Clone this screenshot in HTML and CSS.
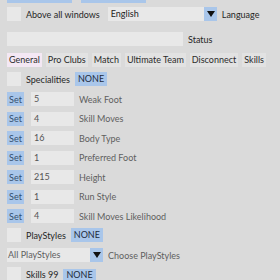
FILE: index.html
```html
<!DOCTYPE html>
<html lang="en">

<head>
    <meta charset="UTF-8">
    <title>Player Editor</title>
    <link rel="stylesheet" href="styles.css">
</head>

<body>
    <div class="panel">
        <div class="top-buttons">
            <span class="btn btn-wide"></span>
            <span class="btn btn-wide"></span>
        </div>

        <div class="row row-first">
            <span class="check"></span>
            <span class="label dark">Above all windows</span>
            <div class="combo combo-lang">
                <span class="combo-text">English</span>
                <span class="combo-arrow"></span>
            </div>
            <span class="label dark">Language</span>
        </div>

        <div class="row row-status">
            <input class="field field-status" type="text">
            <span class="label dark">Status</span>
        </div>

        <div class="tabs">
            <span class="tab active">General</span>
            <span class="tab">Pro Clubs</span>
            <span class="tab">Match</span>
            <span class="tab">Ultimate Team</span>
            <span class="tab">Disconnect</span>
            <span class="tab">Skills</span>
        </div>

        <div class="row row-spec">
            <span class="check"></span>
            <span class="label dark">Specialities</span>
            <span class="badge">NONE</span>
        </div>

        <div class="set-list">
            <div class="row">
                <span class="btn btn-set">Set</span>
                <span class="field field-value">5</span>
                <span class="label">Weak Foot</span>
            </div>
            <div class="row">
                <span class="btn btn-set">Set</span>
                <span class="field field-value">4</span>
                <span class="label">Skill Moves</span>
            </div>
            <div class="row">
                <span class="btn btn-set">Set</span>
                <span class="field field-value">16</span>
                <span class="label">Body Type</span>
            </div>
            <div class="row">
                <span class="btn btn-set">Set</span>
                <span class="field field-value">1</span>
                <span class="label">Preferred Foot</span>
            </div>
            <div class="row">
                <span class="btn btn-set">Set</span>
                <span class="field field-value">215</span>
                <span class="label">Height</span>
            </div>
            <div class="row">
                <span class="btn btn-set">Set</span>
                <span class="field field-value">1</span>
                <span class="label">Run Style</span>
            </div>
            <div class="row">
                <span class="btn btn-set">Set</span>
                <span class="field field-value">4</span>
                <span class="label">Skill Moves Likelihood</span>
            </div>
        </div>

        <div class="row row-play">
            <span class="check"></span>
            <span class="label dark">PlayStyles</span>
            <span class="badge">NONE</span>
        </div>

        <div class="row row-choose">
            <div class="combo combo-play">
                <span class="combo-text">All PlayStyles</span>
                <span class="combo-arrow"></span>
            </div>
            <span class="label">Choose PlayStyles</span>
        </div>

        <div class="row row-skills">
            <span class="check"></span>
            <span class="label dark">Skills 99</span>
            <span class="badge">NONE</span>
        </div>
    </div>
</body>

</html>
```

FILE: styles.css
```css
* {
    box-sizing: border-box;
    margin: 0;
    padding: 0;
}

body {
    background-color: #dadada;
    font-family: Lato, 'Noto Sans', sans-serif;
    font-size: 9px;
    color: #2b2b2b;
    overflow: hidden;
}

.panel {
    padding: 0 7px;
}

/*TOP BUTTONS*/
.top-buttons {
    display: flex;
    gap: 9px;
    margin-top: -11px;
}

.btn {
    display: flex;
    align-items: center;
    justify-content: center;
    background-color: #a9c6ea;
    color: #34506e;
}

.btn-wide {
    width: 65px;
    height: 14px;
}

/*ROWS*/
.row {
    display: flex;
    align-items: center;
    height: 14px;
}

.row-first {
    margin-top: 4px;
}

.row-status {
    margin-top: 11px;
}

.row-spec {
    margin-top: 5px;
}

.row-play {
    margin-top: 5px;
}

.row-choose {
    margin-top: 6px;
}

.row-skills {
    margin-top: 5px;
}

.check {
    width: 14px;
    height: 14px;
    background-color: #e8e8e8;
    flex-shrink: 0;
}

.label {
    margin-left: 5px;
    color: #5f5f5f;
    white-space: nowrap;
}

.label.dark {
    color: #262626;
}

.badge {
    margin-left: 5px;
    padding: 0 3px;
    height: 14px;
    line-height: 14px;
    background-color: #a9c6ea;
    color: #1e2c3c;
}

.row-skills .badge {
    height: 12px;
    line-height: 12px;
    margin-top: 2px;
}

.field {
    height: 14px;
    background-color: #e8e8e8;
    border: none;
    font: inherit;
    color: #555555;
}

.field-status {
    width: 176px;
}

/*COMBO*/
.combo {
    display: flex;
    height: 14px;
    background-color: #e8e8e8;
}

.combo-text {
    flex: 1;
    padding-left: 3px;
    line-height: 14px;
    color: #222222;
}

.combo-arrow {
    width: 13px;
    height: 14px;
    background-color: #a9c6ea;
    position: relative;
}

.combo-arrow::after {
    content: "";
    position: absolute;
    left: 3px;
    top: 4px;
    border-left: 4px solid transparent;
    border-right: 4px solid transparent;
    border-top: 6px solid #111111;
}

.combo-lang {
    width: 109px;
    margin-left: 8px;
}

.combo-play {
    width: 96px;
}

.combo-play .combo-text {
    color: #5f5f5f;
    padding-left: 1px;
}

/*TABS*/
.tabs {
    display: flex;
    gap: 4px;
    margin-top: 7px;
    height: 14px;
}

.tab {
    padding: 0 2px;
    line-height: 14px;
    background-color: #e2e2e2;
    white-space: nowrap;
}

.tab.active {
    background-color: #f4e8f4;
}

/*SET LIST*/
.set-list {
    display: flex;
    flex-direction: column;
    gap: 5.5px;
    margin-top: 6px;
}

.btn-set {
    width: 17px;
    height: 14px;
}

.field-value {
    width: 43px;
    margin-left: 7px;
    padding-left: 3px;
    line-height: 14px;
}
```
